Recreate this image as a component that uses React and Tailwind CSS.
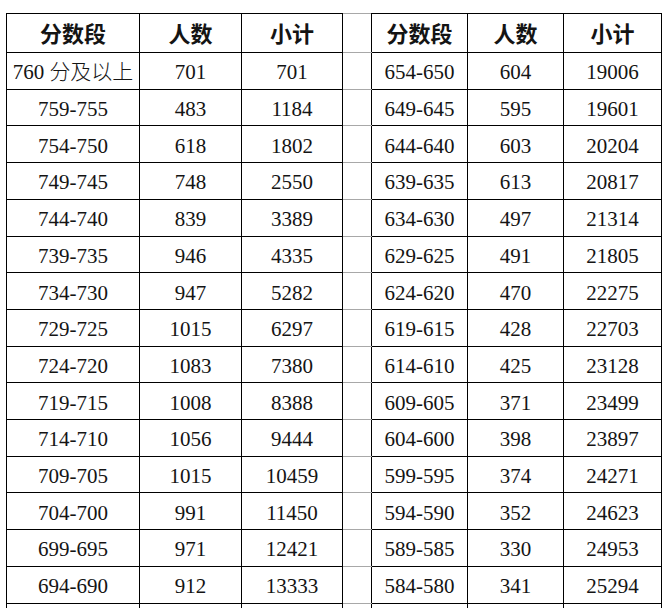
import React from "react";

const left = [
  ["760 分及以上", "701", "701"],
  ["759-755", "483", "1184"],
  ["754-750", "618", "1802"],
  ["749-745", "748", "2550"],
  ["744-740", "839", "3389"],
  ["739-735", "946", "4335"],
  ["734-730", "947", "5282"],
  ["729-725", "1015", "6297"],
  ["724-720", "1083", "7380"],
  ["719-715", "1008", "8388"],
  ["714-710", "1056", "9444"],
  ["709-705", "1015", "10459"],
  ["704-700", "991", "11450"],
  ["699-695", "971", "12421"],
  ["694-690", "912", "13333"],
  ["", "", ""],
];

const right = [
  ["654-650", "604", "19006"],
  ["649-645", "595", "19601"],
  ["644-640", "603", "20204"],
  ["639-635", "613", "20817"],
  ["634-630", "497", "21314"],
  ["629-625", "491", "21805"],
  ["624-620", "470", "22275"],
  ["619-615", "428", "22703"],
  ["614-610", "425", "23128"],
  ["609-605", "371", "23499"],
  ["604-600", "398", "23897"],
  ["599-595", "374", "24271"],
  ["594-590", "352", "24623"],
  ["589-585", "330", "24953"],
  ["584-580", "341", "25294"],
  ["", "", ""],
];

function Cell({ children, head }) {
  return (
    <td
      className={
        "border border-black p-0 text-center align-middle text-[#141414] font-['Liberation_Serif','Noto_Sans_CJK_SC',serif] " +
        (head ? "text-[22px] font-semibold pt-[3px]" : "text-[21px] font-normal pt-[4px]")
      }
    >
      {children}
    </td>
  );
}

function Gap() {
  return (
    <td className="border-y border-y-[#a8a8a8] border-x border-x-black p-0"></td>
  );
}

function Label({ text }) {
  const m = text.match(/^(\d+)(\s)(.+)$/);
  if (m && /[^\x00-\x7f]/.test(m[3])) {
    return (
      <>
        {m[1]}
        {m[2]}
        <span className="font-light">{m[3]}</span>
      </>
    );
  }
  return text;
}

export default function App() {
  const heads = ["分数段", "人数", "小计"];
  return (
    <div className="w-[662px] h-[608px] overflow-hidden bg-white pt-[13px] pl-[6px] font-['Liberation_Serif','Noto_Sans_CJK_SC',serif]">
      <table className="table-fixed border-collapse w-[655px] leading-none">
        <colgroup>
          <col className="w-[133px]" />
          <col className="w-[102px]" />
          <col className="w-[101px]" />
          <col className="w-[29px]" />
          <col className="w-[96px]" />
          <col className="w-[96px]" />
          <col className="w-[98px]" />
        </colgroup>
        <tbody>
          <tr className="h-[39px]">
            {heads.map((h) => (
              <Cell head key={"l" + h}>{h}</Cell>
            ))}
            <Gap />
            {heads.map((h) => (
              <Cell head key={"r" + h}>{h}</Cell>
            ))}
          </tr>
          {left.map((row, i) => (
            <tr className="h-[36.71px]" key={i}>
              {row.map((c, j) => (
                <Cell key={"l" + j}>
                  <Label text={c} />
                </Cell>
              ))}
              <Gap />
              {right[i].map((c, j) => (
                <Cell key={"r" + j}>{c}</Cell>
              ))}
            </tr>
          ))}
        </tbody>
      </table>
    </div>
  );
}
